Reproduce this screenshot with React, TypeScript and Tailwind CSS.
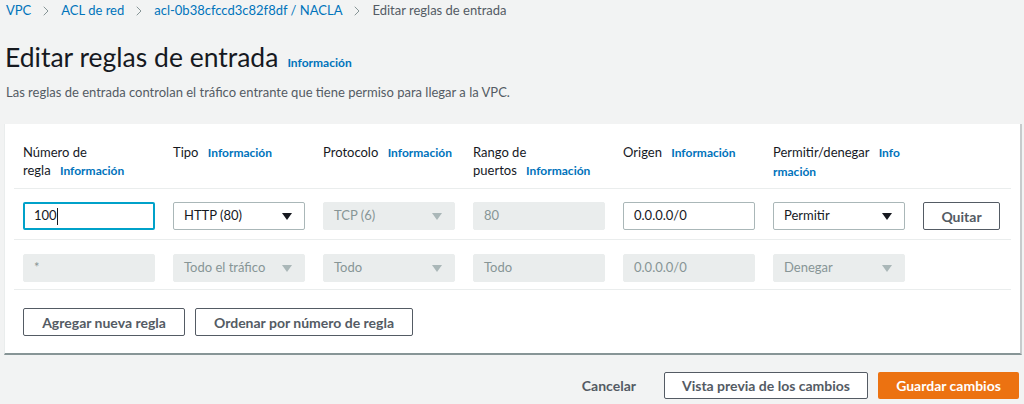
import { ChevronRight } from 'lucide-react';

const font = { fontFamily: 'Lato, "Liberation Sans", sans-serif' };

function Info({ children = 'Información' }: { children?: string }) {
  return <span className="text-[12px] font-bold text-[#0073bb] ml-[6px]">{children}</span>;
}

function Caret({ muted }: { muted?: boolean }) {
  return (
    <svg width="10" height="7" viewBox="0 0 10 7" className="shrink-0">
      <path d="M0 0 L10 0 L5 7 Z" fill={muted ? '#aab7b8' : '#16191f'} />
    </svg>
  );
}

function Field({ value, kind, select }: { value: string; kind: 'focus' | 'normal' | 'disabled'; select?: boolean }) {
  const box =
    kind === 'focus'
      ? 'border-2 border-[#00a1c9] bg-white text-[#16191f] px-[9px]'
      : kind === 'normal'
        ? 'border border-[#aab7b8] bg-white text-[#16191f] px-[10px]'
        : 'border border-[#eaeded] bg-[#eaeded] text-[#879596] px-[10px]';
  return (
    <div className={`w-[132px] h-[28px] rounded-[2px] flex items-center justify-between text-[13px] ${box}`}>
      <span className="flex items-center">
        {value}
        {kind === 'focus' && <span className="inline-block w-px h-[17px] bg-[#16191f]" />}
      </span>
      {select && <span className="mr-[2px]"><Caret muted={kind === 'disabled'} /></span>}
    </div>
  );
}

const headers = [
  <>Número de<br />regla <Info /></>,
  <>Tipo <Info /></>,
  <>Protocolo <Info /></>,
  <>Rango de<br />puertos <Info /></>,
  <>Origen <Info /></>,
  <>Permitir/denegar <Info>Info</Info><br /><span className="text-[12px] font-bold text-[#0073bb]">rmación</span></>,
];

const cols = 'grid grid-cols-[150px_150px_150px_150px_150px_150px_1fr] pl-[9px]';

export default function App() {
  return (
    <div className="w-[1024px] h-[404px] bg-[#f2f3f3] text-[#16191f] overflow-hidden" style={font}>
      <nav className="flex items-center h-[22px] pl-[6px] text-[13px]">
        <span className="text-[#0073bb]">VPC</span>
        <ChevronRight className="w-[16px] h-[16px] text-[#879596] mx-[7px]" strokeWidth={1.5} />
        <span className="text-[#0073bb]">ACL de red</span>
        <ChevronRight className="w-[16px] h-[16px] text-[#879596] mx-[7px]" strokeWidth={1.5} />
        <span className="text-[#0073bb]">acl-0b38cfccd3c82f8df / NACLA</span>
        <ChevronRight className="w-[16px] h-[16px] text-[#879596] mx-[7px]" strokeWidth={1.5} />
        <span className="text-[#545b64]">Editar reglas de entrada</span>
      </nav>

      <div className="flex items-baseline pl-[5px] mt-[18px]">
        <h1 className="text-[26.5px] leading-[34px] text-[#16191f]">Editar reglas de entrada</h1>
        <span className="ml-[9px] text-[12px] font-bold text-[#0073bb]">Información</span>
      </div>
      <p className="pl-[6px] mt-[8px] text-[13px] leading-[20px] text-[#545b64]">
        Las reglas de entrada controlan el tráfico entrante que tiene permiso para llegar a la VPC.
      </p>

      <section className="ml-[4px] w-[1018px] mt-[22px] h-[231px] bg-white border-l border-[#eaeded] border-b-2 border-b-[#879596] border-r-2 border-r-[#c7cbcc] pt-[19px] px-[9px]">
        <div className={`${cols} h-[46px] border-b border-[#eaeded] text-[13px] leading-[18px]`}>
          {headers.map((h, i) => (
            <div key={i}>{h}</div>
          ))}
        </div>
        <div className={`${cols} h-[51px] pt-[13px] border-b border-[#eaeded]`}>
          <Field value="100" kind="focus" />
          <Field value="HTTP (80)" kind="normal" select />
          <Field value="TCP (6)" kind="disabled" select />
          <Field value="80" kind="disabled" />
          <Field value="0.0.0.0/0" kind="normal" />
          <Field value="Permitir" kind="normal" select />
          <button className="w-[77px] h-[28px] border border-[#545b64] rounded-[2px] text-[14px] font-bold text-[#545b64]">Quitar</button>
        </div>
        <div className={`${cols} h-[50px] pt-[14px] border-b border-[#eaeded]`}>
          <Field value="*" kind="disabled" />
          <Field value="Todo el tráfico" kind="disabled" select />
          <Field value="Todo" kind="disabled" select />
          <Field value="Todo" kind="disabled" />
          <Field value="0.0.0.0/0" kind="disabled" />
          <Field value="Denegar" kind="disabled" select />
          <div />
        </div>
        <div className="flex gap-[10px] pl-[9px] pt-[18px]">
          <button className="w-[162px] h-[28px] border border-[#545b64] rounded-[2px] text-[14px] font-bold text-[#545b64]">Agregar nueva regla</button>
          <button className="w-[218px] h-[28px] border border-[#545b64] rounded-[2px] text-[14px] font-bold text-[#545b64]">Ordenar por número de regla</button>
        </div>
      </section>

      <div className="flex items-center justify-end pr-[5px] mt-[17px] gap-[10px]">
        <button className="px-[18px] h-[27px] text-[14px] font-bold text-[#545b64]">Cancelar</button>
        <button className="w-[204px] h-[27px] border border-[#545b64] bg-white rounded-[2px] text-[14px] font-bold text-[#545b64]">Vista previa de los cambios</button>
        <button className="w-[141px] h-[27px] bg-[#ec7211] rounded-[2px] text-[14px] font-bold text-white">Guardar cambios</button>
      </div>
    </div>
  );
}
